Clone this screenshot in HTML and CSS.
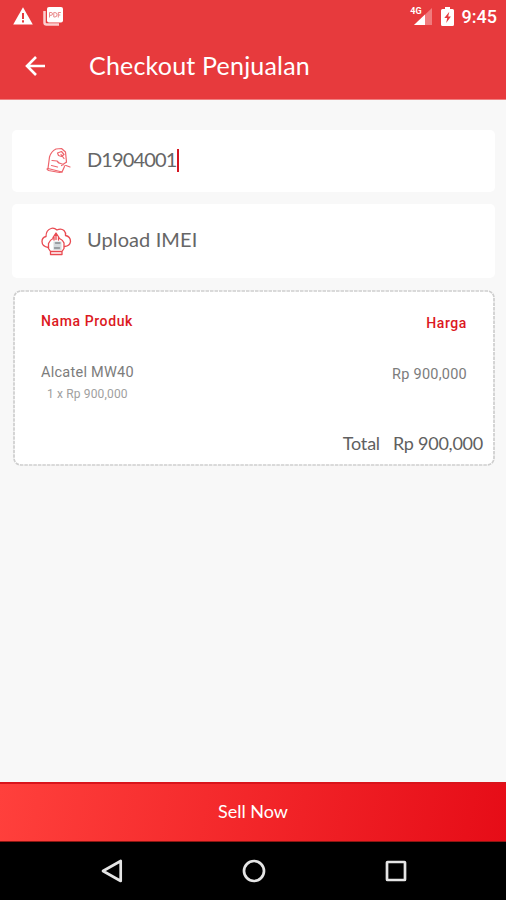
FILE: index.html
```html
<!DOCTYPE html>
<html lang="id">
<head>
<meta charset="utf-8">
<title>Checkout Penjualan</title>
<link rel="stylesheet" href="styles.css">
</head>
<body>
<div class="screen">
  <header class="header">
    <div class="status">
      <svg class="warning" width="20" height="18" viewBox="0 0 20 18"><path d="M10 .3 19.800 17.500H.2Z" fill="#fff"/><path d="M10 6v6M10 13.200v2.200" stroke="#e73a3d" stroke-width="2"/></svg>
      <svg class="pdf" width="20" height="19" viewBox="0 0 20 19"><path d="M1.500 4v11.500q0 2 2 2H16" fill="none" stroke="#fbd0d0" stroke-width="2.500"/><rect x="4" y="0" width="16" height="15.500" rx="2" fill="#fff"/><path d="M6.500 10.500V5.500h1.600a1.300 1.300 0 0 1 0 2.800H6.500M10.800 5.500v4.500h1a2 2 0 0 0 0-4.500ZM15.300 10.500V5.500h2.500M15.300 8h2" fill="none" stroke="#e98889" stroke-width="1"/></svg>
      <span class="spacer"></span>
      <span class="signal"><span class="network">4G</span><svg width="18" height="17" viewBox="0 0 18 17"><path d="M0 17 18 0V17Z" fill="#f07b7d"/><path d="M0 17 11 6.500V17Z" fill="#fff"/></svg></span>
      <svg class="battery" width="13" height="19" viewBox="0 0 13 19"><path d="M4 0h5v2h2.500Q13 2 13 3.500V17.500Q13 19 11.500 19h-10Q0 19 0 17.500v-14Q0 2 1.500 2H4Z" fill="#fff"/><path d="M8.300 4.800 3.300 11h2.900l-1 5 4.700-6.600H7.200Z" fill="#e73a3d"/></svg>
      <span class="clock">9:45</span>
    </div>
    <div class="toolbar">
      <svg width="22" height="20" viewBox="0 0 22 20"><path d="M20 10H2.500M11 1 2 10l9 9" fill="none" stroke="#fff" stroke-width="2.600"/></svg>
      <h1 class="title">Checkout Penjualan</h1>
    </div>
  </header>
  <main class="content">
    <div class="field field-code">
      <svg class="field-icon" width="32" height="32" viewBox="0 0 32 32" fill="none" stroke="#ee656c" stroke-width="1.200" stroke-linecap="round" stroke-linejoin="round"><path d="M24.500 21.500 22 27 8 23.500 9.500 12Q11 6.500 16 4l5.500-.5L25.500 7l1 10"/><path d="m8 23.500-1 .5 1.500 1.500 11 2 2.500-.5M12 15.500l5 .5 2 2M11.500 20.500l6 1.500M18 17.500l12 4.500M26.500 17l-5 3.500"/><path d="m17.500 8 4-1.500 2.500 3-2.500 2-3-1ZM21 9.500l3 4"/></svg>
      <span class="value code">D1904001</span><span class="caret"></span>
    </div>
    <div class="field field-upload">
      <svg class="field-icon" width="32" height="32" viewBox="0 0 32 32" fill="none" stroke="#e94a51" stroke-width="1.300" stroke-linecap="round" stroke-linejoin="round"><path d="M8.500 22.500Q2 21.500 2 16.500q0-4 4-5Q6 5 11 3.500q3-1 6 1.500 4-2 7 .5 2 2 1.500 5 5 1 5 6-.5 4.500-6 5"/><path d="M10.500 29.500h11.500v-3l2-3V18q-1-3-4.500-4.500M10.500 29.500v-3l-2-3v-5q1.500-3.500 4.500-5M10.500 26.500h11.500"/><path d="m13 12.500 3-4.500 3 4.500M16 9v5.500M14 12v3M18.500 12v3"/><path d="M13.500 16.500h8v8.500h-8Z" fill="#d5dadd" stroke="none"/><path d="M15.500 18h4.500M14.500 23h5" stroke="#858b90"/></svg>
      <span class="value upload">Upload IMEI</span>
    </div>
    <section class="summary">
      <svg class="summary-border" width="482" height="176"><rect x="1" y="1" width="480" height="174" rx="7" fill="#fff" stroke="#cecece" stroke-width="1.700" stroke-dasharray="3.500 1"/></svg>
      <div class="row head"><span>Nama Produk</span><span class="price">Harga</span></div>
      <div class="row product"><span>Alcatel MW40</span><span class="price">Rp 900,000</span></div>
      <div class="quantity">1 x Rp 900,000</div>
      <div class="total"><span class="total-label">Total</span><span class="total-price">Rp 900,000</span></div>
    </section>
  </main>
  <button class="sell">Sell Now</button>
  <nav class="navigation">
    <svg width="22" height="24" viewBox="0 0 22 24"><path d="M19.700 2v20L2 12Z"/></svg>
    <svg width="24" height="24" viewBox="0 0 24 24"><circle cx="12" cy="12" r="10"/></svg>
    <svg width="22" height="22" viewBox="0 0 22 22"><rect x="2" y="2" width="18" height="18" rx=".5"/></svg>
  </nav>
</div>
</body>
</html>
```

FILE: styles.css
```css
* { box-sizing: border-box; }
body { margin: 0; }
svg { display: block; flex: none; }
.screen {
  width: 506px;
  height: 900px;
  display: flex;
  flex-direction: column;
  background: #f8f8f8;
  font-family: Lato, sans-serif;
  white-space: nowrap;
}
.header { height: 100px; background: #e73a3d; border-bottom: 1px solid #ef8081; color: #fff; }
.status { height: 33px; display: flex; align-items: flex-start; padding: 7px 9px 0 13px; }
.pdf { margin-left: 10px; }
.spacer { flex: 1; }
.signal { display: flex; align-items: flex-start; }
.signal svg { margin: 1px 0 0 -8px; }
.network { font: bold 9px/9px Roboto, sans-serif; }
.battery { margin: 0 8px 0 9px; }
.clock { font: 500 18px/19px Roboto, sans-serif; }
.toolbar { height: 66px; display: flex; align-items: center; padding-left: 25px; }
.title { margin: -2px 0 0 42px; font-size: 25px; font-weight: 400; line-height: 30px; letter-spacing: .2px; }
.content { flex: 1; padding: 30px 11px 0 12px; }
.field { display: flex; align-items: center; padding-left: 28px; background: #fff; border-radius: 5px; color: #666; font-size: 20px; }
.field-code { height: 62px; margin-bottom: 12px; }
.field-upload { height: 74px; margin-bottom: 11.5px; }
.value { margin: -4px 0 0 15px; line-height: 24px; }
.code { letter-spacing: -.85px; }
.upload { letter-spacing: .1px; }
.caret { width: 2px; height: 23px; margin: -2px 0 0 0; background: #d51521; }
.summary { position: relative; height: 176px; width: 482px; margin-left: 1px; font-family: Roboto, sans-serif; }
.summary-border { position: absolute; inset: 0; }
.row { position: relative; display: flex; justify-content: space-between; padding: 0 27px 0 28px; }
.price { margin-top: 2px; }
.head { padding-top: 21px; color: #dc1822; font-size: 14px; font-weight: 500; line-height: 20px; letter-spacing: .6px; }
.head .price { margin-right: 1px; }
.product { padding-top: 30px; color: #7c7c7c; font-size: 14.5px; line-height: 20px; letter-spacing: .25px; }
.product .price { margin-right: 1px; }
.quantity { position: relative; padding-left: 34px; color: #a0a0a0; font-size: 12px; line-height: 18px; letter-spacing: .15px; }
.total { position: relative; display: flex; justify-content: flex-end; gap: 13px; margin-top: 29px; padding-right: 12px; color: #606060; font: 18px/22px Lato, sans-serif; }
.total-label { letter-spacing: -.2px; }
.total-price { letter-spacing: -.25px; }
.sell { height: 60px; padding: 0 0 3px; border: 0; border-top: 2px solid #d9141b; border-bottom: 1px solid #8b1712; background: linear-gradient(100deg, #ff403c, #e60c17); color: #fff; font: 18px/24px Lato, sans-serif; }
.navigation { height: 58px; display: flex; align-items: center; justify-content: space-between; padding: 0 99px 0 101px; background: #000; }
.navigation svg { fill: none; stroke: #e5e5e5; stroke-width: 2.7; stroke-linejoin: round; }
```
